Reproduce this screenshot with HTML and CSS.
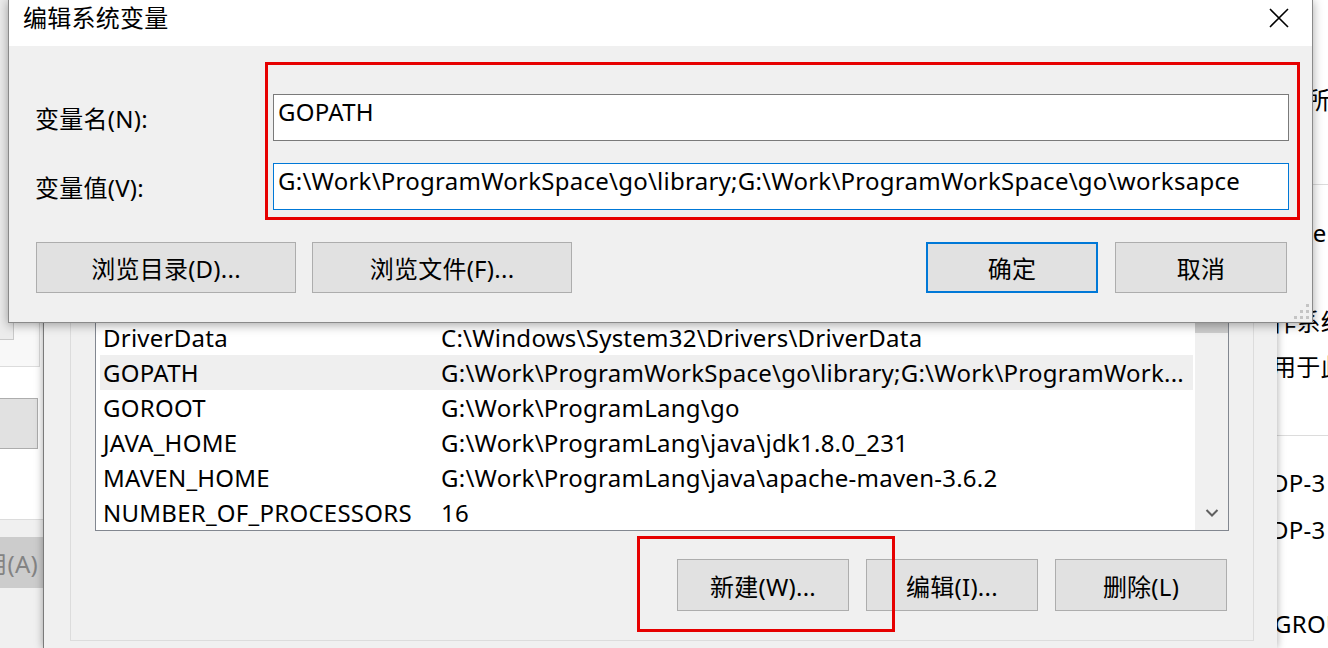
FILE: index.html
```
<!DOCTYPE html>
<html lang="zh-CN">
<head>
    <meta charset="UTF-8">
    <title>编辑系统变量</title>
    <link rel="stylesheet" href="styles.css">
</head>
<body>
<div class="desktop">

    <!-- window at the back -->
    <div class="back-win">
        <div class="back-left">
            <div class="bl-frame"><div class="bl-panel"></div></div>
            <div class="bl-btn"></div>
            <div class="bl-lower">
                <div class="bl-apply">应用(A)</div>
            </div>
        </div>
        <div class="back-right">
            <div class="br-top">所有者</div>
            <div class="br-gen">GenuineIntel</div>
            <div class="br-os">操作系统</div>
            <div class="br-use">用于此</div>
            <div class="br-line"></div>
            <div class="br-dp">DP-3</div>
            <div class="br-dp2">DP-3</div>
            <div class="br-gro">GROUP</div>
        </div>
    </div>

    <!-- 环境变量 dialog -->
    <div class="env-win">
        <div class="group">
            <div class="listview">
                <div class="lv-rows">
                    <div class="lv-row"><span>ComSpec</span><span>C:\Windows\system32\cmd.exe</span></div>
                    <div class="lv-row"><span>DriverData</span><span>C:\Windows\System32\Drivers\DriverData</span></div>
                    <div class="lv-row sel"><span>GOPATH</span><span>G:\Work\ProgramWorkSpace\go\library;G:\Work\ProgramWork...</span></div>
                    <div class="lv-row"><span>GOROOT</span><span>G:\Work\ProgramLang\go</span></div>
                    <div class="lv-row"><span>JAVA_HOME</span><span>G:\Work\ProgramLang\java\jdk1.8.0_231</span></div>
                    <div class="lv-row"><span>MAVEN_HOME</span><span>G:\Work\ProgramLang\java\apache-maven-3.6.2</span></div>
                    <div class="lv-row"><span>NUMBER_OF_PROCESSORS</span><span>16</span></div>
                </div>
                <div class="lv-scroll">
                    <div class="thumb"></div>
                    <div class="track"></div>
                    <div class="arrow">
                        <svg width="14" height="10" viewBox="0 0 14 10"><polyline points="1.5,2 7,7.5 12.5,2" fill="none" stroke="#606060" stroke-width="2"/></svg>
                    </div>
                </div>
            </div>
            <div class="btn-row">
                <div class="btn">新建(W)...</div>
                <div class="btn">编辑(I)...</div>
                <div class="btn">删除(L)</div>
            </div>
        </div>
    </div>

    <div class="mark mark-new"></div>

    <!-- 编辑系统变量 dialog -->
    <div class="edit-dlg">
        <div class="titlebar">
            <div class="title">编辑系统变量</div>
            <div class="close">
                <svg width="20" height="20" viewBox="0 0 20 20"><path d="M1 1L19 19M19 1L1 19" stroke="#000" stroke-width="1.6"/></svg>
            </div>
        </div>
        <div class="dlg-body">
            <div class="field">
                <label>变量名(N):</label>
                <div class="edit">GOPATH</div>
            </div>
            <div class="field">
                <label>变量值(V):</label>
                <div class="edit focus">G:\Work\ProgramWorkSpace\go\library;G:\Work\ProgramWorkSpace\go\worksapce</div>
            </div>
            <div class="dlg-btns">
                <div class="btn btn-wide">浏览目录(D)...</div>
                <div class="btn btn-wide">浏览文件(F)...</div>
                <div class="spacer"></div>
                <div class="btn default">确定</div>
                <div class="btn btn-cancel">取消</div>
            </div>
            <svg class="grip" width="16" height="16" viewBox="0 0 16 16" fill="#c4c4c4">
                <rect x="13" y="1" width="3" height="3"/>
                <rect x="7" y="7" width="3" height="3"/><rect x="13" y="7" width="3" height="3"/>
                <rect x="1" y="13" width="3" height="3"/><rect x="7" y="13" width="3" height="3"/><rect x="13" y="13" width="3" height="3"/>
            </svg>
        </div>
        <div class="mark mark-fields"></div>
    </div>

</div>
</body>
</html>
```
FILE: styles.css
```
* {
    box-sizing: border-box;
}
html, body {
    margin: 0;
    height: 100%;
    overflow: hidden;
}
body {
    font-family: "Noto Sans", "Noto Sans CJK SC", sans-serif;
    font-size: 24px;
    letter-spacing: 0.25px;
    color: #000;
    background: #fff;
}
.desktop {
    position: relative;
    width: 1328px;
    height: 648px;
    overflow: hidden;
}

/* back window */
.back-win {
    position: absolute;
    top: 0;
    left: 0;
    right: 0;
    bottom: 0;
    display: flex;
    justify-content: space-between;
    background: #fff;
}
.back-left {
    width: 44px;
    display: flex;
    flex-direction: column;
}
.bl-frame {
    height: 367px;
    width: 40px;
    border-right: 1px solid #dcdcdc;
    border-bottom: 1px solid #dcdcdc;
    background: #f8f8f8;
}
.bl-panel {
    height: 340px;
    width: 14px;
    border-right: 1px solid #c9c9c9;
    border-bottom: 1px solid #c9c9c9;
    background: #ececec;
}
.bl-btn {
    margin-top: 31px;
    height: 51px;
    width: 38px;
    background: #e1e1e1;
    border: 1px solid #adadad;
    border-left: none;
}
.bl-lower {
    margin-top: 70px;
    flex: 1;
    border-top: 1px solid #dcdcdc;
    background: #f0f0f0;
    padding-top: 17px;
}
.bl-apply {
    height: 51px;
    background: #cccccc;
    color: #838383;
    display: flex;
    align-items: center;
    justify-content: flex-end;
    padding-right: 6px;
    white-space: nowrap;
    overflow: hidden;
}
.back-right {
    width: 88px;
    overflow: hidden;
    white-space: nowrap;
    line-height: 34px;
}
.br-top {
    height: 185px;
    border-bottom: 1px solid #dcdcdc;
    padding: 83px 0 0 66px;
}
.br-gen {
    margin-top: 31px;
    padding-left: 55px;
}
.br-os {
    margin-top: 55px;
    padding-left: 8px;
}
.br-use {
    margin-top: 11px;
    padding-left: 32px;
}
.br-line {
    margin-top: 51px;
    border-top: 1px solid #dcdcdc;
}
.br-dp {
    margin-top: 30px;
    padding-left: 31px;
}
.br-dp2 {
    margin-top: 13px;
    padding-left: 31px;
}
.br-gro {
    margin-top: 60px;
    padding-left: 34px;
}

/* 环境变量 window */
.env-win {
    position: absolute;
    left: 43px;
    top: 0;
    width: 1234px;
    height: 648px;
    background: #f0f0f0;
    border-left: 1px solid #7a7a7a;
    box-shadow: 0 0 8px rgba(0, 0, 0, 0.35);
    display: flex;
    flex-direction: column;
    justify-content: flex-end;
    padding-bottom: 7px;
}
.group {
    margin-left: 26px;
    width: 1184px;
    border: 1px solid #dcdcdc;
    padding: 24px 24px 29px;
}
.listview {
    height: 330px;
    border: 1px solid #828790;
    background: #fff;
    display: flex;
}
.lv-rows {
    flex: 1;
    display: flex;
    flex-direction: column;
    justify-content: flex-end;
    padding: 0 2px 0 4px;
    overflow: hidden;
}
.lv-row {
    flex: none;
    display: grid;
    grid-template-columns: 338px 1fr;
    height: 35px;
    line-height: 35px;
    white-space: nowrap;
}
.lv-row span {
    padding-left: 3px;
    overflow: hidden;
}
.lv-row.sel {
    background: #efefef;
}
.lv-scroll {
    width: 33px;
    background: #f0f0f0;
    display: flex;
    flex-direction: column;
    justify-content: flex-end;
}
.thumb {
    height: 60px;
    background: #cdcdcd;
}
.track {
    height: 162px;
}
.arrow {
    height: 35px;
    display: flex;
    align-items: center;
    justify-content: center;
}
.btn-row {
    margin-top: 28px;
    display: flex;
    justify-content: flex-end;
    gap: 17px;
    padding-right: 2px;
}
.btn {
    width: 172px;
    height: 52px;
    background: #e1e1e1;
    border: 1px solid #adadad;
    display: flex;
    align-items: center;
    justify-content: center;
    white-space: nowrap;
}

/* red annotation boxes */
.mark {
    position: absolute;
    border: 3px solid #e60000;
}
.mark-new {
    left: 637px;
    top: 536px;
    width: 258px;
    height: 96px;
}
.mark-fields {
    left: 256px;
    top: 62px;
    width: 1035px;
    height: 158px;
}

/* 编辑系统变量 dialog */
.edit-dlg {
    position: absolute;
    left: 8px;
    top: -1px;
    width: 1305px;
    height: 324px;
    border: 1px solid #8a8a8a;
    background: #f0f0f0;
    box-shadow: 0 2px 10px rgba(0, 0, 0, 0.35);
    display: flex;
    flex-direction: column;
}
.titlebar {
    height: 46px;
    background: #fff;
    display: flex;
    justify-content: space-between;
}
.title {
    padding: 2px 0 0 14px;
    line-height: 32px;
}
.close {
    width: 66px;
    height: 36px;
    display: flex;
    align-items: center;
    justify-content: center;
}
.dlg-body {
    flex: 1;
    position: relative;
    padding: 48px 23px 0 26px;
}
.field {
    display: flex;
    align-items: center;
}
.field + .field {
    margin-top: 22px;
}
.field label {
    width: 238px;
}
.edit {
    flex: 1;
    height: 47px;
    border: 1px solid #7a7a7a;
    background: #fff;
    padding: 2px 4px 0;
    line-height: 30px;
    white-space: nowrap;
    overflow: hidden;
}
.edit.focus {
    border-color: #0078d7;
}
.dlg-btns {
    display: flex;
    gap: 16px;
    margin-top: 32px;
    padding: 0 2px 0 1px;
}
.dlg-btns .btn {
    height: 51px;
}
.dlg-btns .btn-wide {
    width: 260px;
}
.spacer {
    flex: 1;
}
.btn.default {
    border: 2px solid #0078d7;
}
.btn-cancel {
    margin-left: 1px;
}
.grip {
    position: absolute;
    right: 3px;
    bottom: 3px;
}
```
